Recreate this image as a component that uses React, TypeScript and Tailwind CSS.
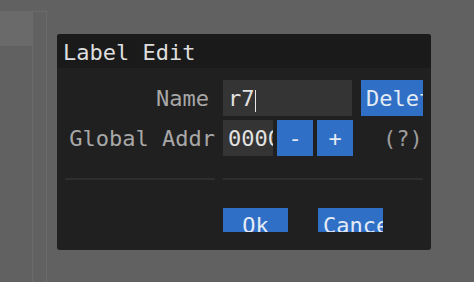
import React from "react";

const mono = { fontFamily: '"DejaVu Sans Mono", "Liberation Mono", monospace' };

export default function App() {
  return (
    <div className="relative w-[474px] h-[282px] overflow-hidden bg-[#616161]" style={mono}>
      {/* background app panels */}
      <div className="flex pt-[11px] h-full">
        <div className="w-[32px] h-[35px] bg-[#6a6a6a]" />
        <div className="w-[15px] h-full border border-b-0 border-[#6b6b6b]" />
      </div>

      {/* modal */}
      <div className="absolute left-[57px] top-[34px] w-[374px] h-[216px] bg-[#202020] rounded-[3px] overflow-hidden flex flex-col">
        <div className="h-[34px] bg-[#1a1a1a] pl-[6px] pt-[8px] text-[22px] leading-none text-[#dedede]">
          Label Edit
        </div>
        <div className="flex flex-col pl-[8px] pt-[12px] text-[22px] leading-none">
          {/* row 1 */}
          <div className="flex h-[36px]">
            <div className="w-[150px] pr-[6px] pt-[8px] text-right text-[#a8a8a8]">Name</div>
            <div className="ml-[8px] w-[129px] h-full bg-[#343434] pl-[5px] pt-[8px] text-[#e2e2e2] flex items-start">
              <span>r7</span>
              <span className="w-px h-[22px] mt-[2px] bg-[#e8e8e8]" />
            </div>
            <div className="ml-[9px] w-[62px] h-full bg-[#2f6fc6] pl-[5px] pt-[8px] text-[#e4ebf5] overflow-hidden whitespace-nowrap">
              Delete
            </div>
          </div>
          {/* row 2 */}
          <div className="flex h-[36px] mt-[4px]">
            <div className="w-[150px] pt-[8px] text-right text-[#a8a8a8] whitespace-nowrap">Global Addr</div>
            <div className="ml-[8px] w-[50px] h-full bg-[#343434] pl-[5px] pt-[8px] text-[#e2e2e2] overflow-hidden whitespace-nowrap">
              00000000
            </div>
            <div className="ml-[4px] w-[36px] h-full bg-[#2f6fc6] pt-[8px] text-center text-[#e4ebf5]">-</div>
            <div className="ml-[4px] w-[36px] h-full bg-[#2f6fc6] pt-[8px] text-center text-[#e4ebf5]">+</div>
            <div className="ml-[30px] pt-[8px] text-[#9c9c9c] whitespace-nowrap">(?)</div>
          </div>
          {/* separators */}
          <div className="flex mt-[22px]">
            <div className="w-[150px] h-[2px] bg-[#2e2e2e]" />
            <div className="ml-[8px] w-[200px] h-[2px] bg-[#2e2e2e]" />
          </div>
          {/* buttons */}
          <div className="flex mt-[28px] ml-[158px]">
            <div className="w-[65px] h-[24px] bg-[#2f6fc6] pt-[7px] text-center text-[#e4ebf5] overflow-hidden">Ok</div>
            <div className="ml-[30px] w-[65px] h-[24px] bg-[#2f6fc6] pl-[5px] pt-[7px] text-[#e4ebf5] overflow-hidden whitespace-nowrap">
              Cancel
            </div>
          </div>
        </div>
      </div>
    </div>
  );
}
